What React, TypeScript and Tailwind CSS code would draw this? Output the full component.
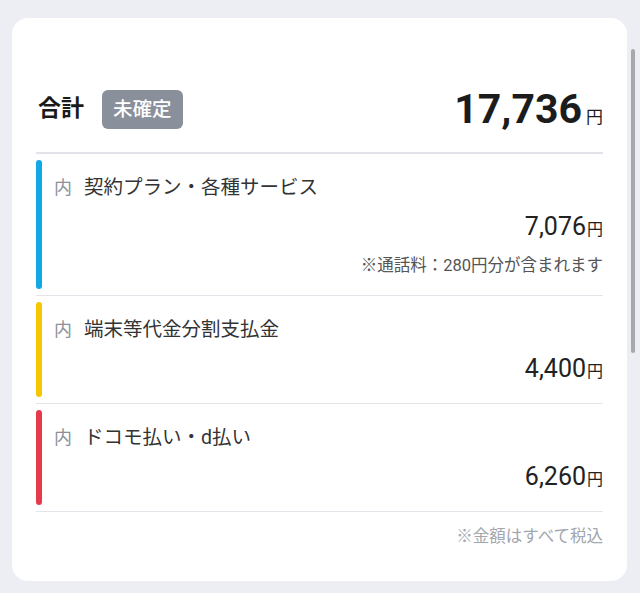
type Item = {
    color: string;
    label: string;
    amount: string;
    note?: string;
};

const items: Item[] = [
    { color: 'bg-[#12a8e8]', label: '契約プラン・各種サービス', amount: '7,076', note: '※通話料：280円分が含まれます' },
    { color: 'bg-[#f6c600]', label: '端末等代金分割支払金', amount: '4,400' },
    { color: 'bg-[#e63a4c]', label: 'ドコモ払い・d払い', amount: '6,260' },
];

const font = { fontFamily: '"Roboto", "Noto Sans CJK JP", sans-serif' };

function Row({ item }: { item: Item }) {
    return (
        <div className="border-b border-[#e3e4e9] pt-[6px] pb-[6px]">
            <div className="flex">
                <div className={`w-[6px] shrink-0 rounded-full ${item.color}`} />
                <div className="flex flex-1 flex-col pl-3 pt-[14px] pb-[12px]">
                    <div className="flex items-center h-[28px] text-[19.5px] leading-[28px] text-[#333]">
                        <span className="text-[18px] text-[#8c909a]">内</span>
                        <span className="ml-3">{item.label}</span>
                    </div>
                    <div className="mt-[9px] flex h-[32px] items-baseline justify-end leading-[32px] text-[#222]">
                        <span className="text-[25px]">{item.amount}</span>
                        <span className="text-[16px] ml-[1px]">円</span>
                    </div>
                    {item.note && (
                        <div className="mt-[12px] text-right text-[16.5px] leading-[22px] text-[#555]">{item.note}</div>
                    )}
                </div>
            </div>
        </div>
    );
}

export default function App() {
    return (
        <div className="relative min-h-[593px] bg-[#eceef3] pt-[18px] pl-3 pr-[13px]" style={font}>
            <div className="rounded-2xl bg-white px-6 pt-[72px] pb-[33px]">
                <div className="flex items-center justify-between h-[39px]">
                    <div className="flex items-center">
                        <span className="text-[23px] font-bold text-[#1a1a1a] ml-[2px]">合計</span>
                        <span className="ml-[18px] flex h-[39px] items-center rounded-md bg-[#8a909b] px-[11px] text-[19.5px] font-medium text-white">
                            未確定
                        </span>
                    </div>
                    <div className="flex items-baseline text-[#1c1c1c]">
                        <span className="text-[41px] font-bold leading-none">17,736</span>
                        <span className="ml-[4px] text-[17px]">円</span>
                    </div>
                </div>
                <div className="mt-[23px] h-[2px] bg-[#e2e3e8]" />
                {items.map((item) => (
                    <Row key={item.amount} item={item} />
                ))}
                <div className="mt-[14px] text-right text-[16.5px] leading-[22px] text-[#a2a6ae]">※金額はすべて税込</div>
            </div>
            <div className="absolute right-[5px] top-[49px] h-[304px] w-[4px] rounded-full bg-[#a8a8ac]" />
        </div>
    );
}
